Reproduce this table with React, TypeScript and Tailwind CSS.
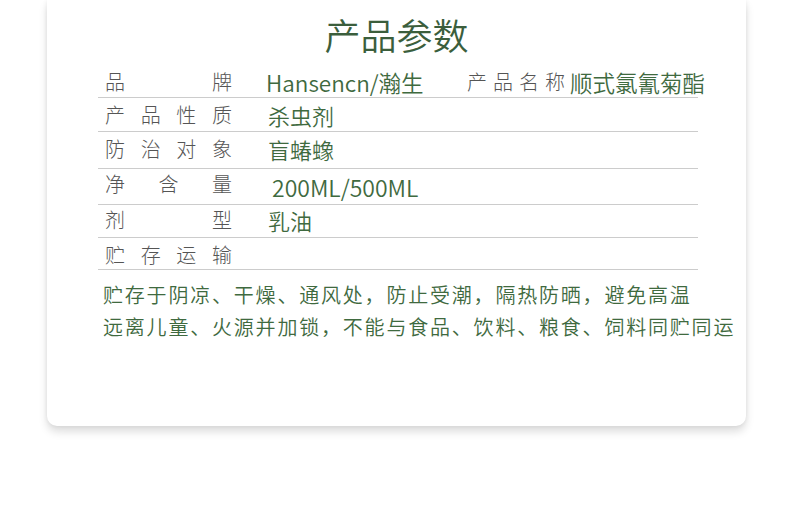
import React from "react";

const font = { fontFamily: '"Noto Sans CJK SC", "Noto Sans", sans-serif' };

function Label({ chars }: { chars: string[] }) {
  return (
    <div className="flex w-[127px] shrink-0 justify-between text-[20px] font-light text-[#555555]">
      {chars.map((c, i) => (
        <span key={i}>{c}</span>
      ))}
    </div>
  );
}

function Row({
  h,
  chars,
  children,
  pad = "",
}: {
  h: string;
  chars: string[];
  children?: React.ReactNode;
  pad?: string;
}) {
  return (
    <div className={`flex items-center border-b border-[#cccccc] pl-[7px] ${h} ${pad}`}>
      <Label chars={chars} />
      <div className="ml-[36px] flex shrink-0 items-center whitespace-nowrap text-[21px] font-[350] text-[#3f6a3f]">
        {children}
      </div>
    </div>
  );
}

export default function App() {
  return (
    <div className="relative h-[508px] w-[790px] overflow-hidden bg-white" style={font}>
      <div className="ml-[47px] h-[426px] w-[699px] rounded-b-[10px] bg-white shadow-[0_6px_8px_rgba(0,0,0,0.13),0_0_5px_rgba(0,0,0,0.07)]">
        <div className="flex h-[64px] items-start justify-center pt-[12px]">
          <div className="text-[36px] font-[350] leading-[44px] text-[#3b5e3c]">产品参数</div>
        </div>
        <div className="ml-[51px] w-[600px] leading-[28px]">
          <Row h="h-[34px]" chars={["品", "牌"]} pad="pt-[2px]">
            <span className="-ml-[2px] w-[201px] shrink-0 text-[22.5px]">Hansencn/瀚生</span>
            <span className="shrink-0 text-[20px] font-light tracking-[6px] text-[#555555]">产品名称</span>
            <span className="ml-[-1px] shrink-0 text-[22.5px]">顺式氯氰菊酯</span>
          </Row>
          <Row h="h-[34px]" chars={["产", "品", "性", "质"]} pad="pt-[1px]">
            <span className="text-[22px]">杀虫剂</span>
          </Row>
          <Row h="h-[37px]" chars={["防", "治", "对", "象"]} pad="pb-[3px]">
            <span className="text-[22px]">盲蝽蟓</span>
          </Row>
          <Row h="h-[36px]" chars={["净", "含", "量"]} pad="pb-[5px]">
            <span className="ml-[4px] mt-[6px] text-[23px]">200ML/500ML</span>
          </Row>
          <Row h="h-[33px]" chars={["剂", "型"]} pad="pb-[2px]">
            <span className="text-[22px]">乳油</span>
          </Row>
          <Row h="h-[32px]" chars={["贮", "存", "运", "输"]} pad="pt-[3px]" />
        </div>
        <div className="ml-[56px] mt-[9px] text-[20px] font-[350] leading-[32px] tracking-[1.8px] text-[#3f6a3f]">
          <div>贮存于阴凉、干燥、通风处，防止受潮，隔热防晒，避免高温</div>
          <div>远离儿童、火源并加锁，不能与食品、饮料、粮食、饲料同贮同运</div>
        </div>
      </div>
    </div>
  );
}
